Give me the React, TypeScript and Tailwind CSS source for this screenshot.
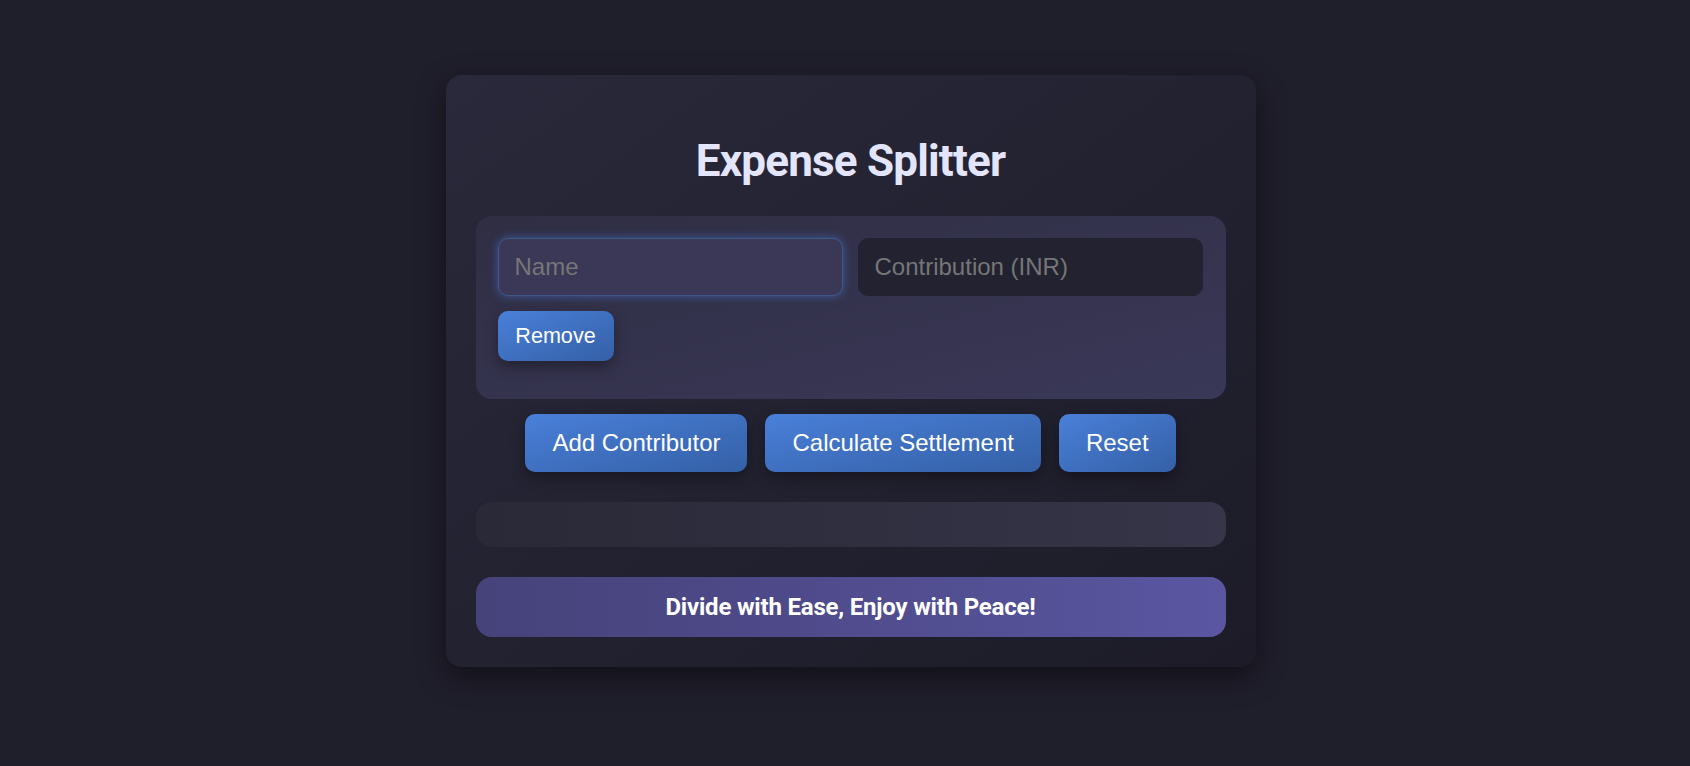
import { useState } from 'react'

type Contributor = { name: string; amount: string }

const btn =
  'rounded-[10px] bg-gradient-to-br from-[#4a80da] to-[#3460a6] text-white shadow-[0_6px_14px_rgba(0,0,0,0.35)] font-["Liberation_Sans",Arial,sans-serif]'

export default function App() {
  const [rows, setRows] = useState<Contributor[]>([{ name: '', amount: '' }])

  const update = (i: number, key: keyof Contributor, value: string) => {
    setRows(rows.map((r, idx) => (idx === i ? { ...r, [key]: value } : r)))
  }

  return (
    <div className="min-h-screen bg-[#1f1e2b] pt-[75px] pl-[11px] flex justify-center">
      <div className="w-[810px] h-fit rounded-2xl bg-gradient-to-br from-[#2a293b] to-[#1c1b27] px-[30px] pb-[30px] pt-[64px] shadow-[0_10px_30px_rgba(0,0,0,0.45)]">
        {/* Title */}
        <h1 className="text-center text-[44px] leading-none font-bold tracking-[-0.8px] text-[#e2e5fb] mb-[33px] font-['Roboto',sans-serif]">
          Expense Splitter
        </h1>

        {/* Contributors */}
        <div className="rounded-2xl bg-gradient-to-br from-[#2f2e43] to-[#3a3858] p-[22px] pb-[38px]">
          {rows.map((row, i) => (
            <div key={i}>
              <div className="flex gap-[15px]">
                <input
                  autoFocus={i === 0}
                  value={row.name}
                  onChange={(e) => update(i, 'name', e.target.value)}
                  placeholder="Name"
                  className="w-[345px] h-[58px] rounded-[10px] border border-[#3f5888] bg-[#3a3757] px-4 text-[24px] text-white caret-white placeholder:text-[#767676] outline-none shadow-[0_0_10px_rgba(70,120,210,0.6)] font-['Liberation_Sans',Arial,sans-serif]"
                />
                <input
                  value={row.amount}
                  onChange={(e) => update(i, 'amount', e.target.value)}
                  placeholder="Contribution (INR)"
                  className="w-[345px] h-[58px] rounded-[10px] border border-[#232231] bg-[#232231] px-4 text-[24px] text-white placeholder:text-[#767676] outline-none font-['Liberation_Sans',Arial,sans-serif]"
                />
              </div>
              <button
                onClick={() => setRows(rows.filter((_, idx) => idx !== i))}
                className={`${btn} mt-[15px] h-[50px] w-[116px] text-[21.6px]`}
              >
                Remove
              </button>
            </div>
          ))}
        </div>

        {/* Actions */}
        <div className="mt-[15px] flex justify-center gap-[18px]">
          <button
            onClick={() => setRows([...rows, { name: '', amount: '' }])}
            className={`${btn} h-[58px] px-[27px] text-[24px]`}
          >
            Add Contributor
          </button>
          <button className={`${btn} h-[58px] px-[27px] text-[24px]`}>Calculate Settlement</button>
          <button
            onClick={() => setRows([{ name: '', amount: '' }])}
            className={`${btn} h-[58px] px-[27px] text-[24px]`}
          >
            Reset
          </button>
        </div>

        {/* Result */}
        <div className="mt-[30px] h-[45px] rounded-2xl bg-gradient-to-r from-[#2a2937] to-[#363549]" />

        {/* Footer */}
        <div className="mt-[30px] h-[60px] rounded-2xl bg-gradient-to-r from-[#46427a] to-[#5a56a1] flex items-center justify-center text-white text-[24px] tracking-[-0.2px] font-bold font-['Roboto',sans-serif]">
          Divide with Ease, Enjoy with Peace!
        </div>
      </div>
    </div>
  )
}
